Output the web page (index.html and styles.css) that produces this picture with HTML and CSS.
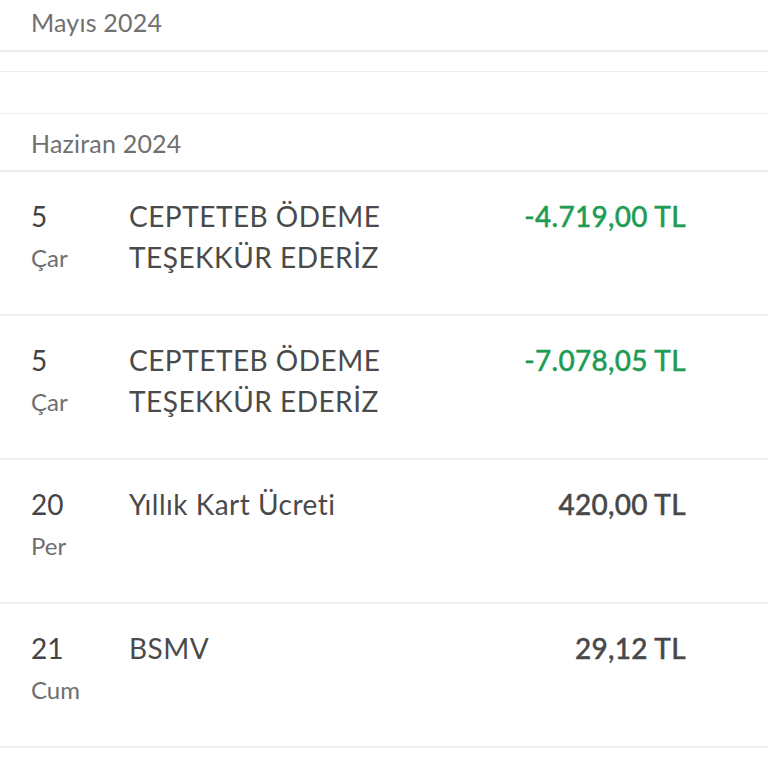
FILE: index.html
```html
<!DOCTYPE html>
<html lang="tr">
<head>
<meta charset="utf-8">
<link rel="stylesheet" href="styles.css">
</head>
<body>
<div class="list">
  <div class="month month-first">Mayıs 2024</div>
  <div class="spacer spacer-small"></div>
  <div class="spacer spacer-large"></div>
  <div class="month">Haziran 2024</div>
  <div class="tx">
    <div class="date"><span class="day">5</span><span class="wd">Çar</span></div>
    <div class="desc">CEPTETEB ÖDEME<br>TEŞEKKÜR EDERİZ</div>
    <div class="amount credit">-4.719,00 TL</div>
  </div>
  <div class="tx">
    <div class="date"><span class="day">5</span><span class="wd">Çar</span></div>
    <div class="desc">CEPTETEB ÖDEME<br>TEŞEKKÜR EDERİZ</div>
    <div class="amount credit">-7.078,05 TL</div>
  </div>
  <div class="tx">
    <div class="date"><span class="day">20</span><span class="wd">Per</span></div>
    <div class="desc">Yıllık Kart Ücreti</div>
    <div class="amount">420,00 TL</div>
  </div>
  <div class="tx">
    <div class="date"><span class="day">21</span><span class="wd">Cum</span></div>
    <div class="desc">BSMV</div>
    <div class="amount">29,12 TL</div>
  </div>
</div>
</body>
</html>
```
FILE: styles.css
```css
html, body {
  margin: 0;
  padding: 0;
  background: #ffffff;
}
body {
  font-family: Lato, "Noto Sans", sans-serif;
  color: #4a4a4a;
}
.list {
  display: flex;
  flex-direction: column;
  width: 768px;
}
.month {
  height: 58px;
  box-sizing: border-box;
  padding: 0 0 0 31px;
  font-size: 25px;
  line-height: 1;
  color: #707070;
  border-bottom: 2px solid #ececec;
  display: flex;
  align-items: flex-start;
  padding-top: 17px;
  letter-spacing: 0.2px;
}
.month-first {
  height: 52px;
  padding-top: 10px;
}
.spacer {
  box-sizing: border-box;
  border-bottom: 1px solid #eeeeee;
}
.spacer-small { height: 20px; }
.spacer-large { height: 42px; }
.tx {
  height: 144px;
  box-sizing: border-box;
  border-bottom: 2px solid #efefef;
  display: grid;
  grid-template-columns: 98px 1fr auto;
  padding: 24px 82px 0 31px;
  font-size: 28px;
  line-height: 41px;
}
.date {
  display: flex;
  flex-direction: column;
}
.day { color: #444444; }
.wd {
  color: #6f6f6f;
  font-size: 24px;
}
.desc {
  color: #4a4a4a;
  letter-spacing: 0.5px;
}
.amount {
  text-align: right;
  font-weight: 500;
  color: #484848;
  letter-spacing: 0.3px;
  -webkit-text-stroke: 0.4px currentColor;
}
.credit { color: #1e9c55; }
```
